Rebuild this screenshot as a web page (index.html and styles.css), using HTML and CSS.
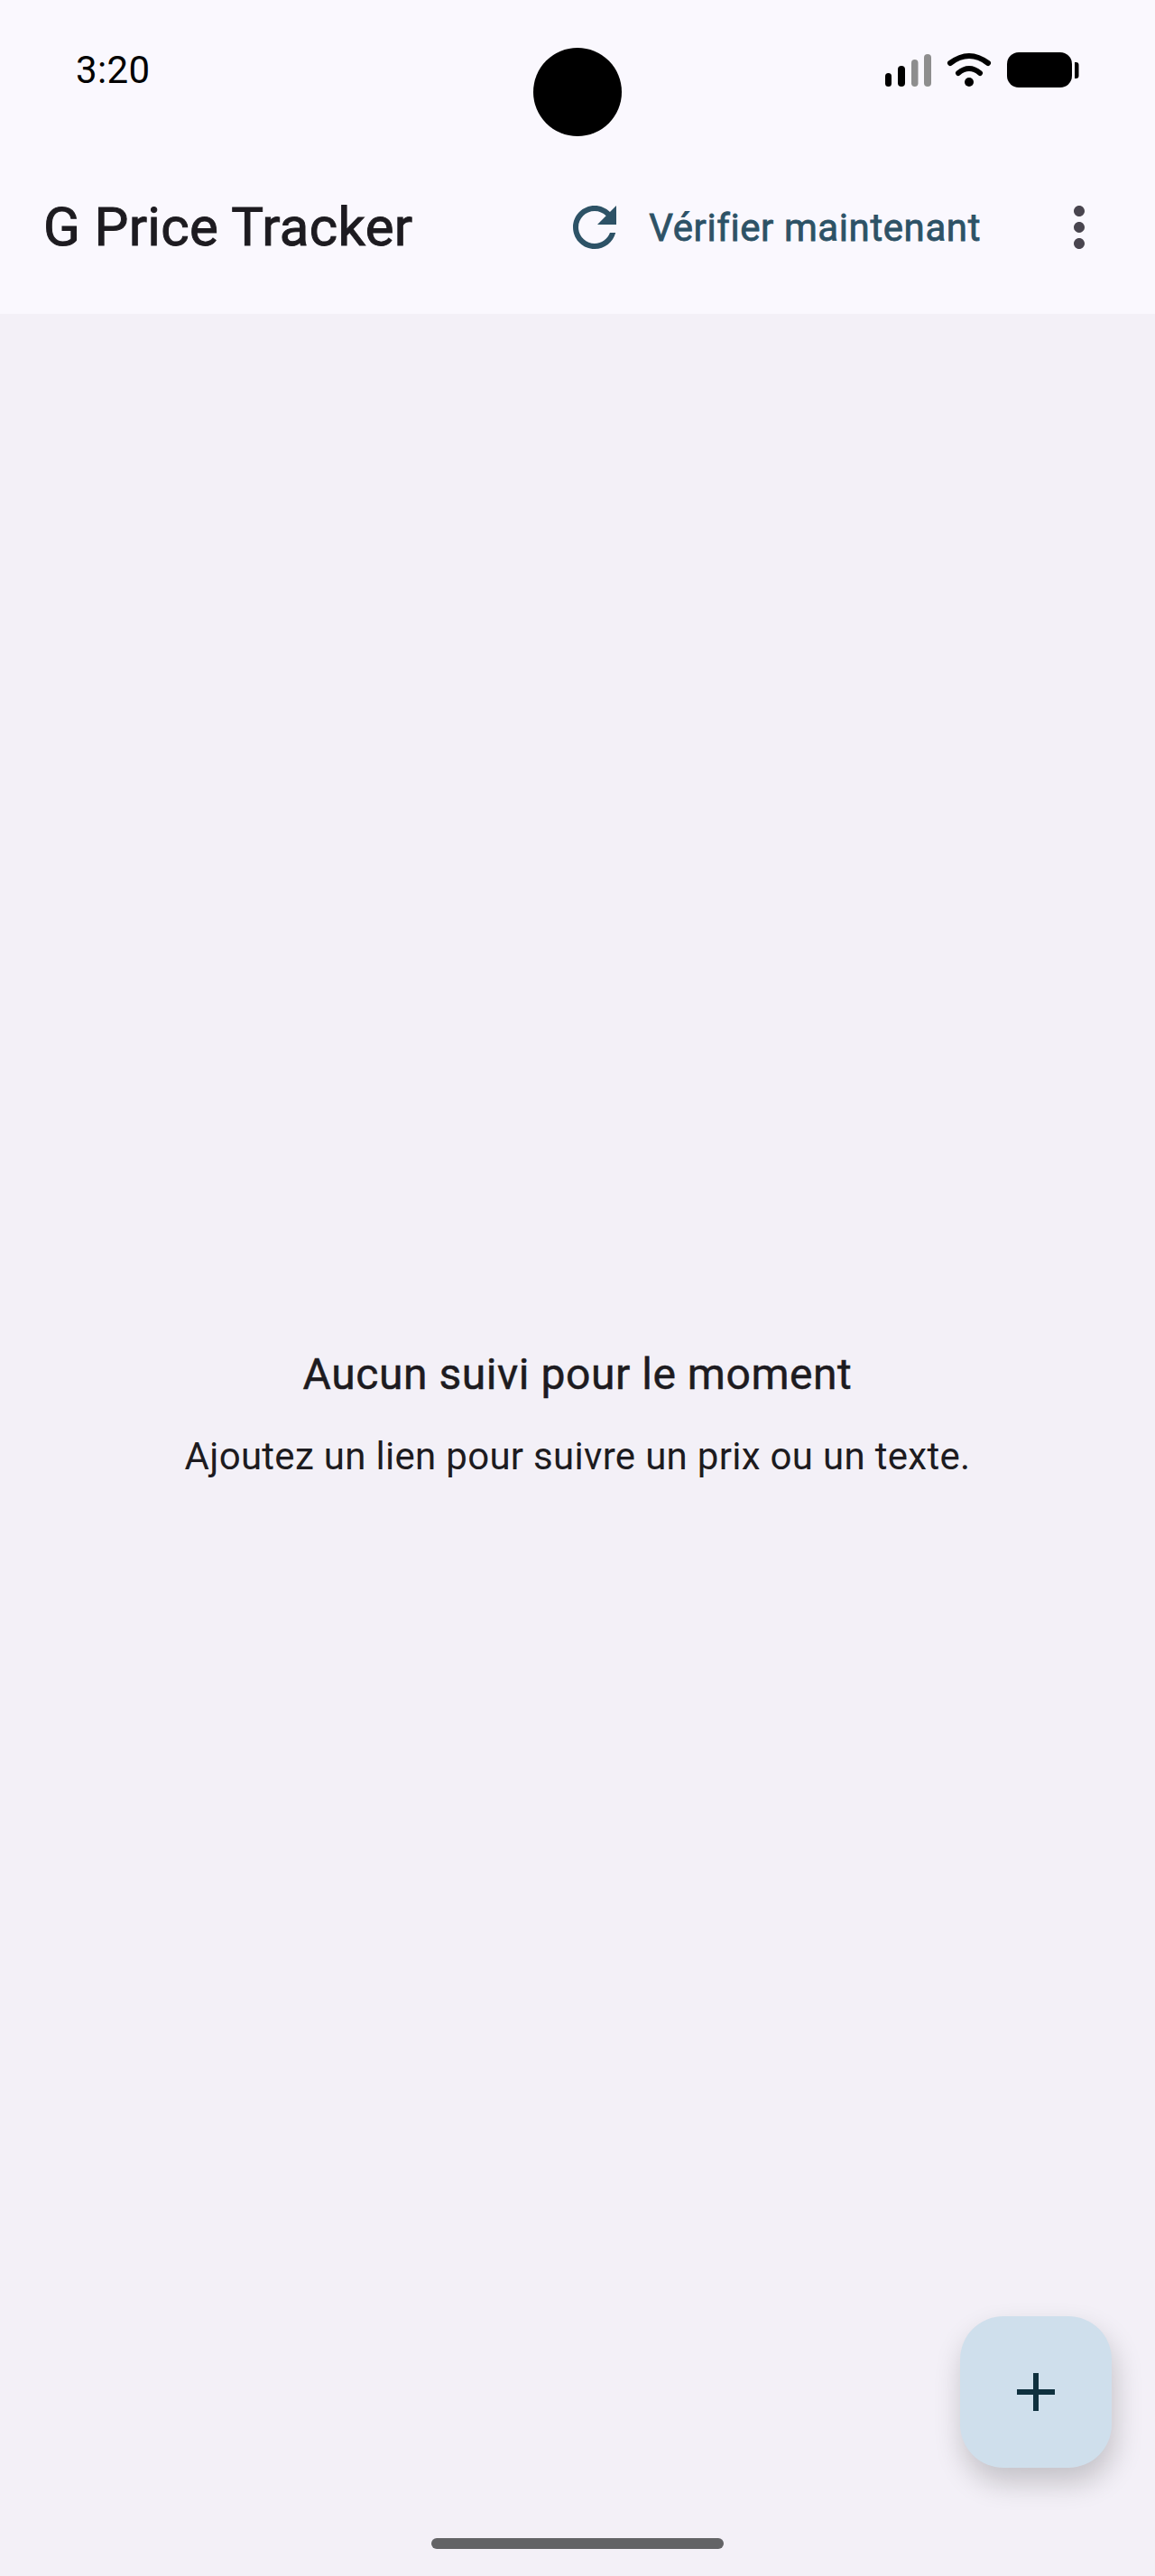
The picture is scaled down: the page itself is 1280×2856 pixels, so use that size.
FILE: index.html
```html
<!DOCTYPE html>
<html lang="fr">
<head>
  <meta charset="UTF-8">
  <title>G Price Tracker</title>
  <link rel="stylesheet" href="styles.css">
</head>
<body>

<div class="phone">
  <div class="top">
    <div class="statusbar">
      <span class="time">3:20</span>
      <svg class="status-icons" width="216" height="40" viewBox="981 58 216 40">
        <rect x="981" y="81" width="7" height="15" rx="3.5" fill="#000"/>
        <rect x="995" y="73" width="8" height="23" rx="4" fill="#000"/>
        <rect x="1010" y="66" width="7.5" height="30" rx="3.7" fill="#8e8e8e"/>
        <rect x="1024" y="60" width="8" height="36" rx="4" fill="#8e8e8e"/>
        <path d="M1053 70Q1074 54 1095 70" fill="none" stroke="#000" stroke-width="6" stroke-linecap="round"/>
        <path d="M1062 81Q1074 71 1086 81" fill="none" stroke="#000" stroke-width="6" stroke-linecap="round"/>
        <circle cx="1074" cy="91" r="5" fill="#000"/>
        <rect x="1116" y="58" width="72" height="39" rx="13" fill="#000"/>
        <path d="M1191 69h1.500a3 3 0 0 1 3 3v12a3 3 0 0 1-3 3h-1.500z" fill="#000"/>
      </svg>
    </div>

    <div class="appbar">
      <h1 class="title">G Price Tracker</h1>
      <div class="check">
        <svg class="icon" viewBox="0 0 24 24">
          <path d="M17.65 6.35C16.2 4.9 14.21 4 12 4c-4.42 0-7.99 3.58-7.99 8s3.57 8 7.99 8c3.73 0 6.84-2.55 7.73-6h-2.08c-.82 2.33-3.04 4-5.65 4-3.31 0-6-2.69-6-6s2.69-6 6-6c1.66 0 3.14.69 4.22 1.78L13 11h7V4l-2.35 2.35z"/>
        </svg>
        <span>Vérifier maintenant</span>
      </div>
      <svg class="icon more" viewBox="0 0 24 24">
        <path d="M12 8c1.1 0 2-.9 2-2s-.9-2-2-2-2 .9-2 2 .9 2 2 2zm0 2c-1.1 0-2 .9-2 2s.9 2 2 2 2-.9 2-2-.9-2-2-2zm0 6c-1.1 0-2 .9-2 2s.9 2 2 2 2-.9 2-2-.9-2-2-2z"/>
      </svg>
    </div>
  </div>

  <div class="empty">
    <h2>Aucun suivi pour le moment</h2>
    <p>Ajoutez un lien pour suivre un prix ou un texte.</p>
  </div>

  <div class="camera"></div>

  <button class="fab">
    <svg viewBox="0 0 24 24"><path d="M19 13h-6v6h-2v-6H5v-2h6V5h2v6h6v2z"/></svg>
  </button>

  <div class="homebar"></div>
</div>

</body>
</html>
```

FILE: styles.css
```css
* {
  box-sizing: border-box;
}

body {
  margin: 0;
  font-family: Roboto, sans-serif;
  background: #f3f0f7;
}

.phone {
  position: relative;
  display: flex;
  flex-direction: column;
  width: 1280px;
  height: 2856px;
  overflow: hidden;
}

.top {
  background: #faf8fe;
}

.statusbar {
  display: flex;
  justify-content: space-between;
  height: 156px;
  padding: 58px 83px 0 84px;
}

.time {
  font-size: 42px;
  line-height: 40px;
  letter-spacing: 0.4px;
  color: #000;
}

.appbar {
  display: flex;
  align-items: center;
  height: 192px;
  padding-right: 48px;
  padding-left: 48px;
}

.title {
  flex: 1;
  margin: 0;
  font-size: 60px;
  font-weight: 400;
  line-height: 1;
  letter-spacing: 0.35px;
  -webkit-text-stroke: 1px #1d1b20;
  color: #1d1b20;
}

.icon {
  display: block;
  width: 72px;
  height: 72px;
}

.check {
  display: flex;
  align-items: center;
  gap: 24px;
  margin-right: 73px;
  font-size: 42px;
  font-weight: 400;
  letter-spacing: 0.6px;
  -webkit-text-stroke: 0.8px #2d5266;
  color: #2d5266;
  fill: #2d5266;
}

.more {
  fill: #49454f;
}

.empty {
  flex: 1;
  display: flex;
  flex-direction: column;
  align-items: center;
  justify-content: center;
  padding-bottom: 71px;
  color: #1d1b20;
}

.empty h2 {
  margin: 0 0 38px;
  font-size: 48px;
  font-weight: 400;
  letter-spacing: 0.55px;
  -webkit-text-stroke: 0.5px #1d1b20;
}

.empty p {
  margin: 0;
  font-size: 42px;
  letter-spacing: 0.3px;
}

.camera {
  position: absolute;
  top: 53px;
  left: 591px;
  width: 98px;
  height: 98px;
  border-radius: 50%;
  background: #000;
}

.fab {
  position: absolute;
  top: 2568px;
  left: 1064px;
  display: flex;
  align-items: center;
  justify-content: center;
  width: 168px;
  height: 168px;
  padding: 0;
  border: none;
  border-radius: 48px;
  background: #cfdfec;
  box-shadow: 3px 16px 32px rgba(0,0,0,0.2);
  fill: #0f303e;
}

.fab svg {
  display: block;
  width: 72px;
  height: 72px;
}

.homebar {
  position: absolute;
  top: 2814px;
  left: 478px;
  width: 324px;
  height: 12px;
  border-radius: 6px;
  background: #636366;
}
```
